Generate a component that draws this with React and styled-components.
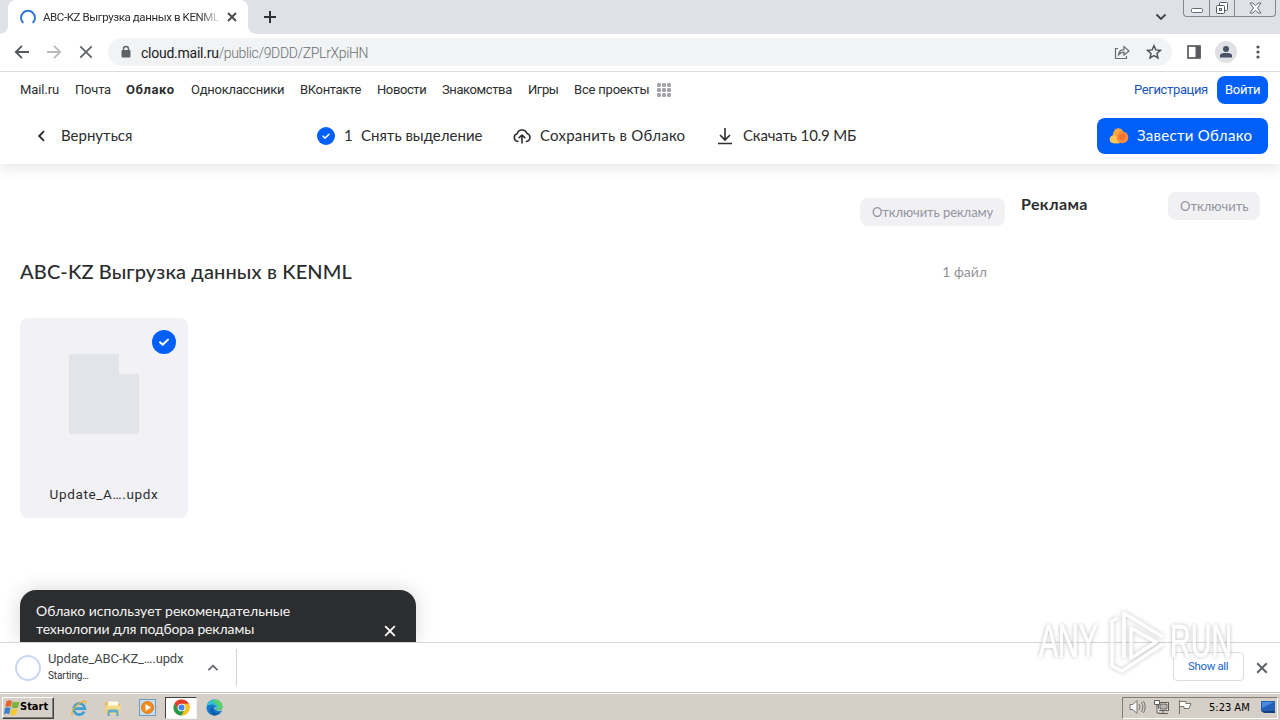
import React from "react";
import styled, { createGlobalStyle } from "styled-components";

const Global = createGlobalStyle`
  * { box-sizing: border-box; }
  body { margin: 0; background: #fff; overflow: hidden; font-family: "Liberation Sans", Arial, sans-serif; color: #2c2d2e; }
  svg { display: block; flex: none; }
`;

const fonts = {
  ui: 'Roboto, "Noto Sans", sans-serif',
  mail: 'Lato, "Noto Sans", sans-serif',
  tahoma: '"DejaVu Sans Condensed", "DejaVu Sans", sans-serif',
};

const Text = styled.span`
  flex: none;
  white-space: pre;
  font-family: ${(p) => fonts[p.$font || "mail"]};
  font-size: ${(p) => p.$size || 15}px;
  line-height: ${(p) => p.$line || 18}px;
  font-weight: ${(p) => p.$weight || 400};
  letter-spacing: ${(p) => p.$track || 0}px;
  color: ${(p) => p.$color || "#2c2d2e"};
  width: ${(p) => (p.$width ? `${p.$width}px` : "auto")};
  margin-bottom: ${(p) => p.$raise || 0}px;
`;

const Screen = styled.div`
  position: relative;
  width: 1280px;
  height: 720px;
  display: flex;
  flex-direction: column;
  overflow: hidden;
`;

/* Browser frame */
const TabStrip = styled.header`
  height: 34px;
  flex: none;
  display: flex;
  align-items: flex-start;
  background: #dee1e8;
`;
const Tab = styled.div`
  width: 256px;
  height: 34px;
  background:
    radial-gradient(circle at 0 26px, transparent 7.5px, #fff 8px) 0 0 / 8px 34px no-repeat,
    radial-gradient(circle at 8px 26px, transparent 7.5px, #fff 8px) 248px 0 / 8px 34px no-repeat;
  background: none;
  display: flex;
  align-items: flex-end;
`;
const TabFoot = styled.div`
  width: 8px;
  height: 8px;
  background: radial-gradient(circle at ${(p) => (p.$right ? "100%" : "0")} 0, transparent 7.5px, #fff 8px);
`;
const TabBody = styled.div`
  width: 240px;
  height: 34px;
  border-radius: 8px 8px 0 0;
  background: #fff;
  display: flex;
  align-items: center;
  padding-left: 12px;
`;
const TabTitle = styled.div`
  width: 178px;
  margin: 0 6px 0 7px;
  display: flex;
  mask-image: linear-gradient(90deg, #000 88%, transparent);
`;
const NewTab = styled.div`
  padding: 11px 0 0 8px;
  flex: 1;
`;
const TabSearch = styled.div`
  padding: 12px 16px 0 0;
`;
const WindowButtons = styled.div`
  width: 93px;
  height: 17px;
  margin-right: 4px;
  display: grid;
  grid-template-columns: 25px 25px 1fr;
  border: 1px solid #85888f;
  border-top: 0;
  border-radius: 0 0 4px 4px;
`;
const WindowButton = styled.div`
  display: flex;
  align-items: center;
  justify-content: center;
  border-left: ${(p) => (p.$first ? 0 : "1px solid #85888f")};
`;
const Toolbar = styled.div`
  height: 38px;
  flex: none;
  display: flex;
  align-items: center;
  padding: 0 13px 2px 14px;
  border-bottom: 1px solid #dcdcdc;
`;
const NavIcons = styled.div`
  display: flex;
  gap: 16px;
  margin-right: 14px;
`;
const Address = styled.div`
  width: 1064px;
  height: 28px;
  border-radius: 14px;
  background: #f1f3f4;
  display: flex;
  align-items: center;
  padding: 0 10px 0 12px;
`;
const Url = styled.div`
  flex: 1;
  display: flex;
  padding: 2px 0 0 9px;
`;
const AddressIcons = styled.div`
  display: flex;
  gap: 16px;
`;
const RightIcons = styled.div`
  display: flex;
  align-items: center;
  gap: 14px;
  padding-left: 15px;
`;
const Avatar = styled.div`
  width: 22px;
  height: 22px;
  border-radius: 50%;
  background: #dfe1e5;
  display: flex;
  align-items: center;
  justify-content: center;
`;

/* Cloud page */
const Page = styled.main`
  height: 570px;
  flex: none;
  display: flex;
  flex-direction: column;
  overflow: hidden;
`;
const PageHead = styled.div`
  height: 92px;
  flex: none;
  box-shadow: 0 4px 14px rgba(0, 0, 0, 0.1);
`;
const Portal = styled.nav`
  height: 36px;
  display: flex;
  align-items: center;
  gap: 16px;
  padding: 0 12px 0 20px;
`;
const Account = styled.div`
  margin-left: auto;
  display: flex;
  align-items: center;
  gap: 9px;
`;
const ProjectsGrid = styled.div`
  margin-left: -8px;
`;
const Login = styled.button`
  width: 51px;
  height: 28px;
  border: 0;
  padding: 0 0 0 8px;
  border-radius: 8px;
  background: #005ff9;
  display: flex;
  align-items: center;
`;
const Actions = styled.div`
  height: 56px;
  display: flex;
  align-items: center;
  padding: 0 12px 0 36px;
`;
const Action = styled.div`
  width: ${(p) => p.$width}px;
  display: flex;
  align-items: center;
  gap: ${(p) => p.$gap}px;
`;
const CreateCloud = styled.button`
  width: 171px;
  height: 36px;
  margin-left: auto;
  border: 0;
  border-radius: 8px;
  background: #005ff9;
  display: flex;
  align-items: center;
  gap: 8px;
  padding: 0 0 0 12px;
`;
const Columns = styled.div`
  display: flex;
  flex: 1;
`;
const Files = styled.section`
  width: 1005px;
  padding: 34px 0 0 20px;
  display: flex;
  flex-direction: column;
`;
const Pill = styled.button`
  width: ${(p) => p.$width}px;
  height: 28px;
  flex: none;
  border: 0;
  border-radius: 8px;
  background: #f1f1f4;
  padding: 0 0 0 12px;
  display: flex;
  align-items: center;
  align-self: ${(p) => (p.$end ? "flex-end" : "auto")};
`;
const TitleRow = styled.div`
  height: 32px;
  margin-top: 30px;
  padding-right: 18px;
  display: flex;
  align-items: center;
  justify-content: space-between;
`;
const FileCard = styled.article`
  width: 168px;
  height: 200px;
  margin-top: 30px;
  border-radius: 8px;
  background: #f2f2f6;
  display: flex;
  flex-direction: column;
  align-items: center;
  padding: 12px;
`;
const CardCheck = styled.div`
  align-self: flex-end;
`;
const CardName = styled.div`
  margin-top: 51px;
`;
const Sidebar = styled.aside`
  flex: 1;
  height: 56px;
  display: flex;
  justify-content: space-between;
  padding: 28px 20px 0 16px;
`;
const Notice = styled.div`
  position: absolute;
  left: 20px;
  top: 590px;
  width: 396px;
  height: 52px;
  border-radius: 16px 16px 0 0;
  background: #2c2d2e;
  box-shadow: 0 0 20px rgba(0, 0, 0, 0.16);
  clip-path: inset(-24px -24px 0 -24px);
  display: flex;
  justify-content: space-between;
  padding: 12px 20px 0 16px;
`;
const NoticeCopy = styled.div`
  display: flex;
  flex-direction: column;
`;
const NoticeClose = styled.div`
  padding-top: 23px;
`;

/* Download shelf */
const Shelf = styled.footer`
  position: relative;
  height: 50px;
  flex: none;
  background: #fff;
  border-top: 1px solid #d4d4d4;
  display: flex;
  align-items: center;
  padding: 0 12px 0 15px;
`;
const DownloadItem = styled.div`
  width: 222px;
  height: 37px;
  border-right: 1px solid #d0d2d5;
  display: flex;
  align-items: center;
`;
const DownloadCopy = styled.div`
  width: 138px;
  margin: 0 21px 2px 7px;
  display: flex;
  flex-direction: column;
`;
const ShowAll = styled.button`
  width: 71px;
  height: 29px;
  margin-left: auto;
  margin-right: 12px;
  margin-bottom: 2px;
  border: 1px solid #dadce0;
  border-radius: 4px;
  background: #fff;
  padding: 0 0 0 14px;
  display: flex;
  align-items: center;
`;

/* Desktop taskbar */
const Taskbar = styled.footer`
  height: 28px;
  flex: none;
  background: #d5cfc7;
  border-top: 1px solid #c5c2bd;
  box-shadow: inset 0 1px #fff;
  display: flex;
  align-items: center;
  padding: 3px 2px 1px;
`;
const Start = styled.button`
  width: 52px;
  height: 22px;
  border: 1px solid;
  border-color: #fff #404040 #404040 #fff;
  box-shadow: inset -1px -1px #85817a;
  background: #d5cfc7;
  display: flex;
  align-items: center;
  padding: 0 0 0 1px;
`;
const Launch = styled.div`
  display: flex;
  align-items: center;
  margin-left: 8px;
`;
const LaunchItem = styled.div`
  width: ${(p) => (p.$active ? 32 : 34)}px;
  height: 22px;
  margin: ${(p) => (p.$active ? "0 0 0 1px" : 0)};
  display: flex;
  align-items: center;
  justify-content: center;
  background: ${(p) => (p.$active ? "#fff" : "transparent")};
  border: ${(p) => (p.$active ? "1px solid" : "0")};
  border-color: #404040 #f6f5f3 #f6f5f3 #404040;
`;
const Tray = styled.div`
  margin-left: auto;
  width: 156px;
  height: 22px;
  border: 1px solid;
  border-color: #827d76 #fff #fff #827d76;
  display: flex;
  align-items: center;
  padding: 0 0 2px 6px;
  gap: 7px;
`;
const TrayClock = styled.div`
  margin: 0 4px 0 8px;
`;

const Watermark = styled.div`
  position: absolute;
  left: 1039px;
  top: 608px;
  width: 196px;
  height: 66px;
  display: flex;
  align-items: center;
  opacity: 0.75;
`;
const MarkWord = styled.div`
  width: ${(p) => p.$width}px;
  font: 400 47px/60px "Liberation Sans", Arial, sans-serif;
  color: #fff;
  white-space: nowrap;
  -webkit-text-stroke: 1px #fff;
  text-shadow: 0 0 4px #b0b0b0, 0 0 6px #b8b8b8;
  transform: scaleX(0.61);
  transform-origin: left center;
`;
const MarkPlay = styled.svg`
  overflow: visible;
  filter: drop-shadow(0 0 2px #b0b0b0);
`;

const Cross = ({ size = 10, color = "#5f6368", w = 2 }) => (
  <svg width={size} height={size} viewBox="0 0 10 10">
    <path d="M1 1l8 8M9 1L1 9" stroke={color} strokeWidth={(w * 10) / size} fill="none" />
  </svg>
);
const Check = ({ size }) => (
  <svg width={size} height={size} viewBox="0 0 24 24">
    <circle cx="12" cy="12" r="12" fill="#005ff9" />
    <path d="M8 12.2l2.7 2.6L16 9.6" fill="none" stroke="#fff" strokeWidth="2" strokeLinecap="round" strokeLinejoin="round" />
  </svg>
);
const BackArrow = ({ color, flip }) => (
  <svg width="16" height="16" viewBox="0 0 16 16">
    <path d={flip ? "M1 8h13M8 1.8L14.2 8 8 14.2" : "M15 8H2M8 1.8L1.8 8 8 14.2"} fill="none" stroke={color} strokeWidth="1.8" />
  </svg>
);
const CloudUpload = () => (
  <svg width="18" height="18" viewBox="0 0 18 18" fill="none" stroke="#2c2d2e" strokeWidth="1.6" strokeLinecap="round" strokeLinejoin="round">
    <path d="M5 14.5a4 4 0 0 1-.9-7.8A5.2 5.2 0 0 1 14 6.5a4.1 4.1 0 0 1-.6 8M9 16V8.2M6.2 10.7L9 8l2.8 2.7" />
  </svg>
);
const Download = () => (
  <svg width="16" height="18" viewBox="0 0 16 18" fill="none" stroke="#2c2d2e" strokeWidth="1.6">
    <path d="M8 1v11.5M3 8l5 5 5-5M1 16.5h14" />
  </svg>
);
const CloudLogo = () => (
  <svg width="20" height="18" viewBox="0 0 20 18">
    <path d="M5 16.2C1.8 16.2.6 13.8.8 12c.2-2 1.7-3 3-3.4C3.9 4.5 6 1.3 9.5 1.2c3 0 4.5 2.2 5 4.4l-4 10.6z" fill="#ffa63d" />
    <path d="M4.1 8.6c4.2-1 7 2.5 6 7.6H5C1.8 16.2.6 13.8.8 12c.2-2 2-3.2 3.3-3.4z" fill="#ffc658" />
    <circle cx="13.4" cy="10.4" r="5.9" fill="#ff8b3c" />
    <circle cx="13.2" cy="9.8" r="3.4" fill="#fb7232" />
  </svg>
);
const Dots = () => (
  <svg width="14" height="14" viewBox="0 0 14 14" fill="#a3a4a9">
    {[0, 5, 10].map((y) => [0, 5, 10].map((x) => <rect key={`${x}-${y}`} x={x} y={y} width="4" height="4" rx="1.3" />))}
  </svg>
);
const WindowsFlag = () => (
  <svg width="16" height="16" viewBox="0 0 16 16">
    <path d="M2.5 1.2Q5.3-.4 8 1L6.900 6.800Q4.2 5.600 1.300 7.100z" fill="#e8622c" />
    <path d="M8.800 1.600q2.900 1.500 6.700-.2L14 7.400q-3.300 1.600-6.400 0z" fill="#78b43c" />
    <path d="M1 8.100q2.900-1.600 5.600-.1L5.200 14.200Q2.800 12.700 0 14.300z" fill="#3a80ca" />
    <path d="M7.400 8.500q3 1.500 6.300.1L12.200 14.500q-3.300 1.700-6.200.2z" fill="#f7c735" />
  </svg>
);
const ExplorerE = () => (
  <svg width="18" height="18" viewBox="0 0 18 18" fill="none">
    <path d="M14.300 12.600a5.600 5.600 0 1 1 .6-3H4.500" stroke="#3c9fd7" strokeWidth="2.600" />
    <path d="M2.8 15.8C0 15.500 3.400 8.400 9 4.500c4-2.800 7.400-3.200 7-.2" stroke="#e7b62d" strokeWidth="1.400" />
  </svg>
);
const Folder = () => (
  <svg width="18" height="18" viewBox="0 0 18 18">
    <path d="M1 3h5l1.200 2H16v10H1z" fill="#e7bd59" />
    <path d="M4 2.500h10v5H4z" fill="#fffbe5" />
    <path d="M1.500 6.500h15V15h-15z" fill="#f3da8b" />
    <path d="M3.500 17v-4.500q0-2 2-2h7q2 0 2 2V17h-2.200v-3.500H5.700V17z" fill="#62aace" />
  </svg>
);
const Player = () => (
  <svg width="17" height="17" viewBox="0 0 17 17">
    <rect x=".5" y=".5" width="16" height="16" fill="#c5dff1" stroke="#6d9cc4" />
    <circle cx="8.500" cy="8.500" r="6" fill="#f18b1c" stroke="#df7b12" />
    <path d="M6.500 5v7l5.500-3.500z" fill="#fff" />
  </svg>
);
const Chrome = () => (
  <svg width="17" height="17" viewBox="0 0 18 18">
    <circle cx="9" cy="9" r="8.500" fill="#fbc116" />
    <path d="M9 9H17.500A8.500 8.500 0 0 0 1.640 4.750L5.300 11z" fill="#e33b2e" />
    <path d="M9 9L5.300 11 1.640 4.750A8.500 8.500 0 0 0 9 17.500L12.700 11z" fill="#229a4b" />
    <path d="M9 4.900h7.400A8.500 8.500 0 0 1 9 17.500l3.600-6.400z" fill="#fbc116" />
    <circle cx="9" cy="9" r="4.100" fill="#fff" />
    <circle cx="9" cy="9" r="3.200" fill="#4285f4" />
  </svg>
);
const Edge = () => (
  <svg width="17" height="17" viewBox="0 0 18 18">
    <circle cx="9" cy="9" r="8.500" fill="#1479cc" />
    <path d="M.6 8C1.500 3 5 .5 9.200.5c5 0 8.300 3.700 8.300 7.300 0 3-2.300 4.300-4.600 4.300-2 0-3-.8-2.600-1.400 1.300-2.300-.2-4.700-3.200-4.800C4 5.800 1.500 6.900.6 8z" fill="#35bfd0" />
    <path d="M9.200.5c5 0 8.300 3.700 8.300 7.300 0 3-2.300 4.300-4.600 4.300-.7 0-1.500-.2-2-.4 3.600-2.200 1.600-8.200-4.200-8.500z" fill="#5bd267" />
    <path d="M7.500 8.300c-1.600 3.700 1.500 7.700 7.400 6.300-1.800 2.100-4.200 3-7 2.800-3.800-1.800-4.300-7.300-.4-9.100z" fill="#1259a8" />
    <path d="M9.300 8.100c-1.700 2.500 2.400 5.700 7.800 4.100l1-.4v-3.200c-1 2.600-2.800 3.500-5.200 3.500-2 0-3-.8-2.600-1.400q.6-1.300-1-2.600z" fill="#d5cfc7" />
  </svg>
);

const links = [
  ["Mail.ru", 39, -0.1], ["Почта", 35, -0.2], ["Облако", 49, 0.6], ["Одноклассники", 93, -0.25], ["ВКонтакте", 61, -0.35],
  ["Новости", 49, -0.4], ["Знакомства", 70, -0.4], ["Игры", 30, -0.4], ["Все проекты", 75, -0.2],
];

export default function App() {
  return (
    <Screen>
      <Global />
      <TabStrip>
        <Tab>
          <TabFoot />
          <TabBody>
            <svg width="16" height="16" viewBox="0 0 16 16">
              <path d="M3.300 14A7 7 0 1 1 12.700 14" fill="none" stroke="#3478d4" strokeWidth="2" />
            </svg>
            <TabTitle><Text $font="ui" $size={11.5} $track={-0.4}>ABC-KZ Выгрузка данных в KENML</Text></TabTitle>
            <Cross size={10} color="#4b4e52" />
          </TabBody>
          <TabFoot $right />
        </Tab>
        <NewTab>
          <svg width="12" height="12" viewBox="0 0 12 12"><path d="M6 0v12M0 6h12" stroke="#303238" strokeWidth="2" /></svg>
        </NewTab>
        <TabSearch>
          <svg width="12" height="10" viewBox="0 0 12 10"><path d="M1.500 2.500L6 7l4.500-4.500" fill="none" stroke="#3c4043" strokeWidth="1.800" /></svg>
        </TabSearch>
        <WindowButtons>
          <WindowButton $first>
            <svg width="12" height="16" viewBox="0 0 12 16"><rect x=".5" y="8.500" width="11" height="4" rx="1" fill="#fff" stroke="#666a73" /></svg>
          </WindowButton>
          <WindowButton>
            <svg width="14" height="14" viewBox="0 0 14 14" fill="#fff" stroke="#555963"><rect x="4.500" y="1.500" width="8" height="8" rx="1" /><rect x="1.500" y="4.500" width="8" height="8" rx="1" /><rect x="4.500" y="7.500" width="2" height="2" /></svg>
          </WindowButton>
          <WindowButton>
            <svg width="13" height="12" viewBox="0 0 13 12"><path d="M1 1h3l2.500 2.800L9 1h3L8.500 6l3.500 5H9L6.500 8.200 4 11H1l3.500-5z" fill="#fff" stroke="#666a73" /></svg>
          </WindowButton>
        </WindowButtons>
      </TabStrip>

      <Toolbar>
        <NavIcons>
          <BackArrow color="#54575b" />
          <BackArrow color="#b9bbbe" flip />
          <svg width="16" height="16" viewBox="0 0 16 16"><path d="M2.300 2.300l11.400 11.400M13.700 2.300L2.300 13.700" stroke="#5f6368" strokeWidth="1.800" /></svg>
        </NavIcons>
        <Address>
          <svg width="12" height="14" viewBox="0 0 12 14"><rect x="1.500" y="5" width="9" height="7.500" rx="1" fill="#5f6368" /><path d="M3.500 5.500V4a2.500 2.500 0 0 1 5 0v1.500" fill="none" stroke="#5f6368" strokeWidth="1.400" /></svg>
          <Url>
            <Text $font="ui" $size={14} $color="#202124" $track={-0.25}>cloud.mail.ru</Text>
            <Text $font="ui" $size={14} $color="#6b6f73" $track={-0.35} $weight={300}>/public/9DDD/ZPLrXpiHN</Text>
          </Url>
          <AddressIcons>
            <svg width="16" height="16" viewBox="0 0 16 16" fill="none" stroke="#696c70" strokeWidth="1.200"><path d="M4 4.500H1.500v10h11V12M4.500 11c.4-3.700 2.500-5.400 5.500-5.400V2.500L15 7l-5 4V8.200C7.800 8.200 6 9 4.500 11z" /></svg>
            <svg width="16" height="16" viewBox="0 0 16 16"><path d="M8 1.700l1.900 4.200 4.600.5L11 9.500l1 4.500-4-2.300L4 14l1-4.500L1.500 6.400l4.600-.5z" fill="none" stroke="#505458" strokeWidth="1.500" /></svg>
          </AddressIcons>
        </Address>
        <RightIcons>
          <svg width="14" height="14" viewBox="0 0 14 14"><rect x="1" y="1" width="12" height="12" fill="none" stroke="#5a5b5f" strokeWidth="1.700" /><path d="M8.500 1h5v12h-5z" fill="#5a5b5f" /></svg>
          <Avatar><svg width="14" height="14" viewBox="0 0 14 14" fill="#495166"><circle cx="7" cy="4" r="3" /><path d="M1 12.500v-2C1 8.500 4 8 7 8s6 .5 6 2.500v2z" /></svg></Avatar>
          <svg width="14" height="16" viewBox="1 0 14 16" fill="#505458"><circle cx="8" cy="3" r="1.600" /><circle cx="8" cy="8" r="1.600" /><circle cx="8" cy="13" r="1.600" /></svg>
        </RightIcons>
      </Toolbar>

      <Page>
        <PageHead>
          <Portal>
            {links.map(([label, width, track]) => (
              <Text key={label} $font="ui" $size={13} $width={width} $track={track} $weight={label === "Облако" ? 700 : 400}>{label}</Text>
            ))}
            <ProjectsGrid><Dots /></ProjectsGrid>
            <Account>
              <Text $font="ui" $size={13} $width={74} $track={-0.35} $color="#1a55b8">Регистрация</Text>
              <Login><Text $font="ui" $size={13} $track={-0.3} $color="#fff">Войти</Text></Login>
            </Account>
          </Portal>
          <Actions>
            <Action $width={281} $gap={14}>
              <svg width="11" height="12" viewBox="0 0 11 12"><path d="M8 1.200L3.200 6 8 10.800" fill="none" stroke="#2c2d2e" strokeWidth="1.900" /></svg>
              <Text $raise={2}>Вернуться</Text>
            </Action>
            <Action $width={196} $gap={9}>
              <Check size={18} />
              <Text $raise={2} $width={8}>1</Text>
              <Text $raise={2}>Снять выделение</Text>
            </Action>
            <Action $width={204} $gap={9}>
              <CloudUpload />
              <Text $raise={2} $track={0.24}>Сохранить в Облако</Text>
            </Action>
            <Action $width={160} $gap={10}>
              <Download />
              <Text $raise={2} $track={-0.15}>Скачать 10.9 МБ</Text>
            </Action>
            <CreateCloud><CloudLogo /><Text $raise={2} $color="#fff" $track={0.28}>Завести Облако</Text></CreateCloud>
          </Actions>
        </PageHead>
        <Columns>
          <Files>
            <Pill $width={145} $end><Text $size={13} $track={-0.08} $color="#9295a0">Отключить рекламу</Text></Pill>
            <TitleRow>
              <Text $size={20} $line={26} $weight={500} $raise={3} $track={0.13}>ABC-KZ Выгрузка данных в KENML</Text>
              <Text $size={14} $color="#919399">1 файл</Text>
            </TitleRow>
            <FileCard>
              <CardCheck><Check size={24} /></CardCheck>
              <svg width="70" height="80" viewBox="0 0 70 80"><path d="M2 0h48v20h20v58a2 2 0 0 1-2 2H2a2 2 0 0 1-2-2V2a2 2 0 0 1 2-2z" fill="#e1e4e8" /></svg>
              <CardName><Text $size={13.5} $font="ui" $track={0.65}>Update_A….updx</Text></CardName>
            </FileCard>
          </Files>
          <Sidebar>
            <Text $size={16} $line={23} $weight={700} $track={0.4}>Реклама</Text>
            <Pill $width={92}><Text $size={13} $color="#9295a0">Отключить</Text></Pill>
          </Sidebar>
        </Columns>
        <Notice>
          <NoticeCopy>
            <Text $size={14} $color="#f6f6f6">Облако использует рекомендательные</Text>
            <Text $size={14} $color="#f6f6f6" $track={-0.12}>технологии для подбора рекламы</Text>
          </NoticeCopy>
          <NoticeClose><Cross size={12} color="#fff" w={1.8} /></NoticeClose>
        </Notice>
      </Page>

      <Shelf>
        <DownloadItem>
          <svg width="26" height="26" viewBox="0 0 26 26"><circle cx="13" cy="13" r="12" fill="none" stroke="#cbd6f3" strokeWidth="2" /></svg>
          <DownloadCopy>
            <Text $font="ui" $size={13} $track={-0.13} $color="#45484c">Update_ABC-KZ_….updx</Text>
            <Text $font="ui" $size={10} $line={15} $track={-0.1} $color="#303236">Starting…</Text>
          </DownloadCopy>
          <svg width="12" height="10" viewBox="0 0 12 10"><path d="M1.500 7.200L6 2.700l4.500 4.500" fill="none" stroke="#5f6368" strokeWidth="1.800" /></svg>
        </DownloadItem>
        <ShowAll><Text $font="ui" $size={11.5} $track={-0.35} $raise={1} $color="#1967c7">Show all</Text></ShowAll>
        <Cross size={12} />
      </Shelf>

      <Taskbar>
        <Start><WindowsFlag /><Text $font="tahoma" $size={11} $weight={700} $raise={1} $color="#000">Start</Text></Start>
        <Launch>
          <LaunchItem><ExplorerE /></LaunchItem>
          <LaunchItem><Folder /></LaunchItem>
          <LaunchItem><Player /></LaunchItem>
          <LaunchItem $active><Chrome /></LaunchItem>
          <LaunchItem><Edge /></LaunchItem>
        </Launch>
        <Tray>
          <svg width="17" height="16" viewBox="0 0 17 16" fill="none" stroke="#77736d"><path d="M1 5.500h3L8 1.500v13L4 10.500H1z" fill="#fff" /><path d="M10 5q2 3 0 6M12.300 3q3.200 5 0 10M14.500 2q3.300 6 0 12" /></svg>
          <svg width="17" height="16" viewBox="0 0 17 16" fill="none" stroke="#5f5b56"><rect x="5.500" y="3.500" width="10" height="8" fill="#fff" /><path d="M7 5h7v5H7z" fill="#bbb7b0" /><path d="M10 12v2M6 14.500h9" /><path d="M1.500 1.500h5v4h-5zM4 6v8h3" fill="#fff" /></svg>
          <svg width="17" height="16" viewBox="0 0 17 16"><path d="M2.500 1v14M3 2.500h6v2h5l-2 5H7v-2H3" fill="#fff" stroke="#77736d" /></svg>
          <TrayClock><Text $font="tahoma" $size={11} $color="#000" $width={42}>5:23 AM</Text></TrayClock>
          <svg width="15" height="14" viewBox="0 0 15 14"><path d="M0 1h14v10H0z" fill="#2260b8" /><path d="M1 2h12L1 8z" fill="#4b8bdd" /><path d="M0 11h14v2H3z" fill="#173e7e" /></svg>
        </Tray>
      </Taskbar>

      <Watermark>
        <MarkWord $width={68}>ANY</MarkWord>
        <MarkPlay width="63" height="66" viewBox="0 0 63 66" fill="none">
          <g stroke="#fff" strokeWidth="3.500" strokeLinejoin="round">
            <path d="M17 50V5L56 29" />
            <path d="M11 10L5 13V58l10 5 41-27" />
            <path d="M24 20l25 14-25 16z" />
          </g>
        </MarkPlay>
        <MarkWord $width={64}>RUN</MarkWord>
      </Watermark>
    </Screen>
  );
}
